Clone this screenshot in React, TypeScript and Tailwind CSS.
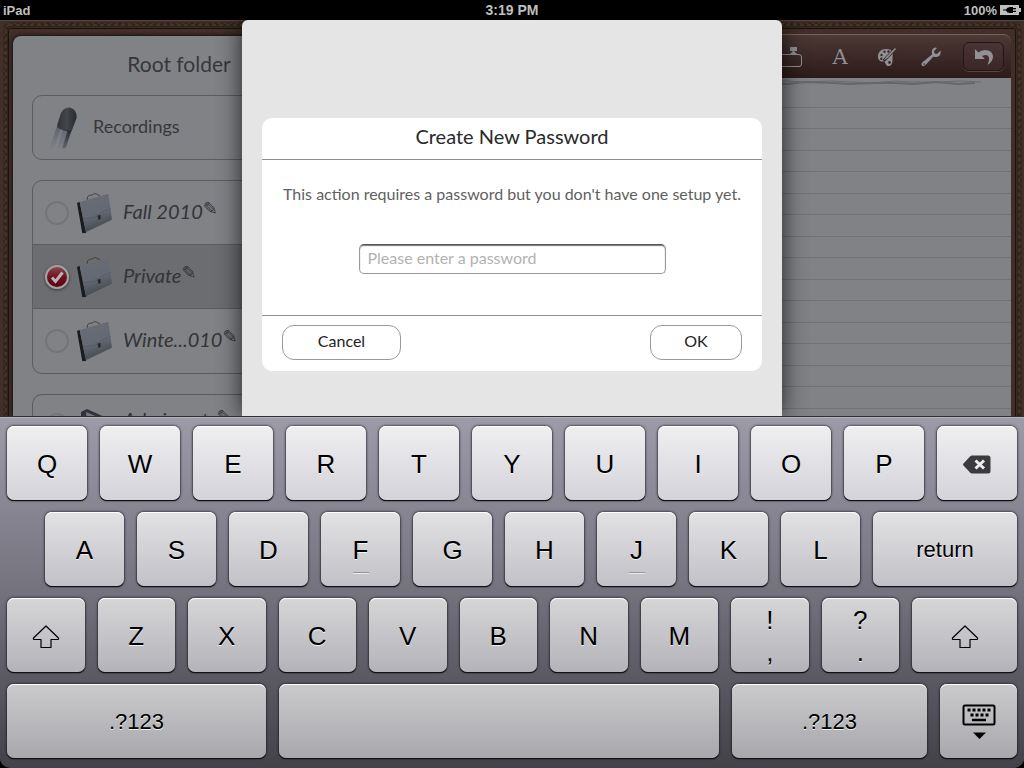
import type { ReactNode } from 'react';

const FOLDERS = [
  { name: 'Fall 2010', checked: false },
  { name: 'Private', checked: true },
  { name: 'Winte...010', checked: false },
];

const ROW_TOP = ['Q', 'W', 'E', 'R', 'T', 'Y', 'U', 'I', 'O', 'P'];
const ROW_HOME = ['A', 'S', 'D', 'F', 'G', 'H', 'J', 'K', 'L'];
const ROW_BOTTOM = ['Z', 'X', 'C', 'V', 'B', 'N', 'M'];

const SHADES = {
  top: 'from-[#efeff1] to-[#d4d3d9]',
  home: 'from-[#e2e2e4] to-[#c2c1c7]',
  bottom: 'from-[#d6d6d8] to-[#b4b3b9]',
  space: 'from-[#cbcbcd] to-[#a8a7ac]',
};

function Key({ shade, size = 'flex-1', label, children }: {
  shade: keyof typeof SHADES;
  size?: string;
  label?: string;
  children?: ReactNode;
}) {
  return (
    <button
      type="button"
      aria-label={label}
      className={`relative flex h-[74px] min-w-0 flex-col items-center justify-center rounded-[7px] bg-linear-to-b pt-0.5 text-[26px] leading-8 text-black [text-shadow:0_1px_0_rgba(255,255,255,0.8)] shadow-[inset_0_1px_0_#fff,0_1px_0_#111,0_1px_1px_#000,0_0_2px_1px_rgba(30,30,38,0.6)] ${SHADES[shade]} ${size}`}
    >
      {children}
    </button>
  );
}

function ShiftIcon() {
  return (
    <svg width="28" height="25" viewBox="0 0 28 25" fill="none" stroke="#000" strokeWidth="1.2" strokeLinejoin="round">
      <path d="M14 2 L26.500 14 Q27 15.500 25.500 15.500 H19 V23.500 H9 V15.500 H2.500 Q1 15.500 1.500 14 Z" />
    </svg>
  );
}

function DeleteIcon() {
  return (
    <svg width="28" height="19" viewBox="0 0 28 19">
      <path d="M9 .5H25Q27.500 .5 27.500 3V16Q27.500 18.500 25 18.500H9Q8 18.500 7 17.500L.5 10.500Q-.3 9.500 .5 8.500L7 1.500Q8 .5 9 .5Z" fill="#3b3b3d" />
      <path d="M12.500 5.500L21 13.500M21 5.500L12.500 13.500" stroke="#eeeef0" strokeWidth="3" />
    </svg>
  );
}

function HideKeyboardIcon() {
  return (
    <svg width="34" height="36" viewBox="0 0 34 36">
      <rect x="1.500" y="1.500" width="31" height="19" rx="1.500" fill="none" stroke="#000" strokeWidth="2" />
      <path d="M5.500 6H29" stroke="#000" strokeWidth="3" strokeDasharray="3 2" />
      <path d="M8.500 11H27" stroke="#000" strokeWidth="3" strokeDasharray="3 2" />
      <path d="M10 16H24" stroke="#000" strokeWidth="2.500" />
      <path d="M11 28.500H24L17.500 35Z" fill="#000" />
    </svg>
  );
}

function Keyboard() {
  return (
    <div className="bg-black">
      <div className="flex flex-col gap-3 rounded-b-[10px] border-t border-[#2e2e33] bg-linear-to-b from-[#9d9ba8] via-[#73727d] to-[#434249] px-[7px] pt-[9px] pb-[10px] font-['Liberation_Sans',Arial,sans-serif] shadow-[inset_0_1px_0_#b5b3be]">
        <div className="flex gap-[13px]">
          {ROW_TOP.map(k => <Key key={k} shade="top">{k}</Key>)}
          <Key shade="top" label="Delete"><DeleteIcon /></Key>
        </div>
        <div className="flex gap-[13px] pl-[38px]">
          {ROW_HOME.map(k => (
            <Key key={k} shade="home">
              {k}
              {(k === 'F' || k === 'J') && (
                <span className="absolute bottom-3 h-0.5 w-4 border-t border-[#929299] bg-[#ececee]" />
              )}
            </Key>
          ))}
          <Key shade="home" size="w-[144px]"><span className="text-[22px]">return</span></Key>
        </div>
        <div className="flex gap-[13px]">
          <Key shade="bottom" label="Left shift"><ShiftIcon /></Key>
          {ROW_BOTTOM.map(k => <Key key={k} shade="bottom">{k}</Key>)}
          <Key shade="bottom"><span>!</span><span>,</span></Key>
          <Key shade="bottom"><span>?</span><span>.</span></Key>
          <Key shade="bottom" size="w-[105px]" label="Right shift"><ShiftIcon /></Key>
        </div>
        <div className="flex gap-[13px]">
          <Key shade="space" size="flex-[259]"><span className="text-[22px]">.?123</span></Key>
          <Key shade="space" size="flex-[440]" label="Space" />
          <Key shade="space" size="flex-[195]"><span className="text-[22px]">.?123</span></Key>
          <Key shade="space" size="w-[77px]" label="Hide keyboard"><HideKeyboardIcon /></Key>
        </div>
      </div>
    </div>
  );
}

function StatusBar() {
  return (
    <header className="grid h-5 grid-cols-3 items-center bg-black px-[3px] font-['Liberation_Sans',Arial,sans-serif] text-[13px] leading-[19px] font-bold text-[#bfbfbf]">
      <span>iPad</span>
      <span className="text-center text-[14px]">3:19 PM</span>
      <span className="flex items-center justify-end gap-[3px]">
        100%
        <svg width="21" height="10" viewBox="0 0 21 10">
          <rect width="19" height="10" fill="#bfbfbf" />
          <path d="M19 3h2v4h-2z" fill="#bfbfbf" />
          <path d="M3 4.500h3Q7 2 10 2H13v1h3v1.300h-3v1.500h3v1.200h-3v1H10Q7 8 6 5.500H3z" fill="#000" />
        </svg>
      </span>
    </header>
  );
}

// Leather cover with two seams running round the notebook
function Leather() {
  return (
    <svg className="absolute inset-0 size-full" aria-hidden="true">
      <defs>
        <filter id="grain" x="0" y="0" width="100%" height="100%">
          <feTurbulence type="fractalNoise" baseFrequency="0.35" numOctaves="3" seed="4" />
          <feColorMatrix values="0 0 0 0 0.06  0 0 0 0 0.03  0 0 0 0 0.02  1.6 0 0 0 -0.45" />
        </filter>
      </defs>
      <rect width="100%" height="100%" fill="#3f2e28" />
      <rect width="100%" height="100%" filter="url(#grain)" />
      <g fill="none">
        <rect x="6" y="5" width="1013" height="500" rx="3" stroke="#2b1f19" strokeWidth="5" opacity="0.7" />
        <rect x="6" y="5" width="1013" height="500" rx="3" stroke="#574726" strokeWidth="1" strokeDasharray="4 3" />
        <rect x="4.500" y="3.500" width="1016" height="500" rx="3" stroke="#40322a" strokeWidth="1" strokeDasharray="3 3" />
        <rect x="8.500" y="8.500" width="1007" height="500" rx="2" stroke="#1b1312" />
        <path d="M0 .5H1024" stroke="#54453e" />
      </g>
    </svg>
  );
}

function Briefcase() {
  return (
    <svg className="shrink-0" width="36" height="42" viewBox="0 0 108 126">
      <defs>
        <linearGradient id="case" x1="0" y1="0" x2="0.3" y2="1">
          <stop offset="0" stopColor="#686e76" />
          <stop offset="0.6" stopColor="#646a73" />
          <stop offset="1" stopColor="#464b53" />
        </linearGradient>
      </defs>
      <path d="M30 24L32 14Q36 9 46 9Q52 2 59 6L70 13L71 19" fill="none" stroke="#33363b" strokeWidth="2.500" />
      <path d="M0 33L8 29L28 122L16 124Z" fill="#191b1f" />
      <path d="M8 30L94 5L105 83L26 121Z" fill="url(#case)" />
      <path d="M21 80Q44 86 62 74Q76 56 101 50" fill="none" stroke="#4a4f57" strokeWidth="2" />
      <path d="M21 82Q44 88 63 76Q76 58 101 52" fill="none" stroke="#777d85" strokeWidth="1" />
      <path d="M62 71L70 68L71 81L64 84Z" fill="#24272c" />
    </svg>
  );
}

function Microphone() {
  return (
    <svg className="shrink-0" width="28" height="42" viewBox="0 0 84 126">
      <defs>
        <linearGradient id="stem" x1="0" y1="0" x2="0" y2="1">
          <stop offset="0" stopColor="#5d6269" />
          <stop offset="1" stopColor="#6d7178" stopOpacity="0.2" />
        </linearGradient>
        <linearGradient id="stemDark" x1="0" y1="0" x2="0" y2="1">
          <stop offset="0" stopColor="#2c2f34" />
          <stop offset="1" stopColor="#2c2f34" stopOpacity="0.3" />
        </linearGradient>
        <linearGradient id="head">
          <stop offset="0" stopColor="#2f3135" />
          <stop offset="0.5" stopColor="#43464b" />
          <stop offset="1" stopColor="#27292d" />
        </linearGradient>
      </defs>
      <path d="M23 60L67 72L50 124H2Z" fill="url(#stem)" />
      <path d="M56 70L67 72L50 124H40Z" fill="url(#stemDark)" />
      <path d="M34 66L42 69L24 124H15Z" fill="#8f939a" opacity="0.35" />
      <path d="M24 56L35 20Q44 0 64 2Q84 8 83 32L68 72Q44 71 24 58Z" fill="url(#head)" />
      <path d="M24 60Q44 72 67 73" fill="none" stroke="#1b1d20" strokeWidth="2" />
    </svg>
  );
}

function FolderName({ name }: { name: string }) {
  return (
    <span className="ml-[10px] flex text-[20px] leading-6 whitespace-nowrap text-[#333438] italic">
      {name}
      <span className="font-['DejaVu_Sans',sans-serif] text-[18px] leading-5 not-italic">✎</span>
    </span>
  );
}

function FolderRow({ name, checked }: { name: string; checked: boolean }) {
  return (
    <label className={`flex h-16 items-center border-b border-[#5b5c60] pl-3 last:border-b-0 ${checked ? 'bg-[#6c6d70]' : ''}`}>
      <span className="relative size-6 shrink-0">
        <input
          type="checkbox"
          defaultChecked={checked}
          className="block size-6 appearance-none rounded-full border-2 border-[#747579] checked:border-[#a2a2a5] checked:bg-linear-to-b checked:from-[#8c4350] checked:via-[#70101f] checked:to-[#600011] checked:shadow-[0_1px_3px_#333]"
        />
        {checked && (
          <svg className="absolute inset-0" width="24" height="24" viewBox="0 0 24 24">
            <path d="M7 12.500L10.500 16.500L17.500 7.500" fill="none" stroke="#b5b5b7" strokeWidth="3" />
          </svg>
        )}
      </span>
      <span className="ml-2"><Briefcase /></span>
      <span className="pb-1"><FolderName name={name} /></span>
    </label>
  );
}

function Sidebar() {
  return (
    <aside className="w-[332px] shrink-0 rounded-t-lg bg-[#818286] px-[19px] pt-[14px] text-[#36373b] shadow-[0_0_4px_#000]">
      <h1 className="text-center text-[21px] leading-7">Root folder</h1>
      <button type="button" className="mt-[17px] flex h-[65px] w-full items-center rounded-[10px] border border-[#5b5c60] pl-4 text-left">
        <Microphone />
        <span className="ml-4 pb-0.5 text-[18px]">Recordings</span>
      </button>
      <div className="mt-5 overflow-hidden rounded-[10px] border border-[#5b5c60]">
        {FOLDERS.map(f => <FolderRow key={f.name} {...f} />)}
      </div>
      <div className="mt-5 rounded-t-[10px] border border-b-0 border-[#5b5c60]">
        <label className="flex h-16 items-start pl-3">
          <input type="checkbox" className="mt-[18px] size-6 shrink-0 appearance-none rounded-full border-2 border-[#747579]" />
          <svg className="mt-[14px] ml-3 shrink-0" width="32" height="36" viewBox="0 0 32 36">
            <path d="M0 3L6 0L28 10V36H0Z" fill="#30343a" />
            <path d="M5 3L26 12V36H9Z" fill="#777b81" />
          </svg>
          <span className="mt-3"><FolderName name="Admin...nts" /></span>
        </label>
      </div>
    </aside>
  );
}

function Toolbar() {
  return (
    <div className="flex h-11 items-center justify-end rounded-t-lg border-t border-[#75625f] bg-linear-to-b from-[#4d3936] to-[#2b1b19] pr-[7px] text-[#909194]">
      <button type="button" aria-label="Tape" className="mr-7">
        <svg width="26" height="22" viewBox="0 0 26 22" fill="none" stroke="currentColor">
          <rect x=".5" y="8.500" width="24" height="12" rx="2.500" />
          <path d="M13 1h7v4h-7zM13 8l3-3h1l3 3z" fill="currentColor" stroke="none" />
        </svg>
      </button>
      <button type="button" aria-label="Text" className="mr-7 w-[18px] text-center font-['DejaVu_Serif',serif] text-[21px] leading-8">
        A
      </button>
      <button type="button" aria-label="Colors" className="mr-6">
        <svg width="20" height="20" viewBox="0 0 20 20">
          <path d="M9 2C4 2 1 5.500 1 9.500S4 15 6 14.500C9 13.500 7.500 19 12 19C15 19 16 14 15.500 10L16 5C15 3 12 2 9 2Z" fill="currentColor" />
          <g fill="#3d2b29">
            <circle cx="4.500" cy="8" r="1.200" />
            <circle cx="7.500" cy="4.800" r="1.200" />
            <circle cx="11.500" cy="4.500" r="1.200" />
            <circle cx="4.200" cy="11.800" r="1.200" />
            <circle cx="12.500" cy="15.500" r="1.400" />
          </g>
          <path d="M6.500 14L19 1" stroke="#3d2b29" strokeWidth="3.200" />
          <path d="M6.500 13.500L9 10L18 1L19 2L10.500 11Z" fill="currentColor" />
        </svg>
      </button>
      <button type="button" aria-label="Settings" className="mr-[22px]">
        <svg width="20" height="20" viewBox="0 0 20 20" fill="currentColor">
          <path d="M11 6.500Q10 1.500 14.500 .5L16 1L13 4L13.500 6.500L16 7L19.500 3.500Q20.500 9 15.500 10Q13.500 10 12.500 9.500L4.500 18Q2.500 20 1 18.500Q-.3 17 1.500 15.300L11 7.500ZM2.500 16.500V17.800H3.800V16.500Z" fillRule="evenodd" />
        </svg>
      </button>
      <button type="button" aria-label="Undo" className="flex h-[29px] w-[41px] items-center justify-center rounded-md border border-[#221513] bg-linear-to-b from-[#493534] to-[#3a2625] shadow-[0_1px_0_#574443]">
        <svg width="20" height="18" viewBox="0 0 20 18" fill="currentColor">
          <path d="M1 1V11H11L8 8Q14 5 15 10Q15.500 13 13.500 17Q19.500 13 19 8Q18 2 11 2Q7 2.200 4.500 4.500Z" />
        </svg>
      </button>
    </div>
  );
}

function Notebook() {
  return (
    <section className="flex min-w-0 flex-1 flex-col">
      <Toolbar />
      <div className="flex flex-1 flex-col bg-[#818286]">
        {/* torn edge of the previous pages */}
        <svg className="h-2 w-full" viewBox="0 0 660 8" preserveAspectRatio="none" fill="none" aria-hidden="true">
          <path d="M0 3q18 2 36 0t34 1t40-1t38 1t36-1t40 1t34-1t38 1l18-1l20 1l16-1l24 1l14-1l22 2l24-2l16 1l30-1l18 1l22 1l24-2l16 1l30 0l18-1l22 1" stroke="#696a6e" strokeWidth="1" />
          <path d="M0 6q20-2 38 0t34-1t40 1t38-1t36 1t40-1t34 1t38-1l16 1l24-2l14 2l20-1l26 1l14-1l24 1l18-2l28 1l16 1l24-1l22 0l18 1l24-2l20 2l18-1" stroke="#66676b" strokeWidth="2" />
        </svg>
        <div className="flex flex-1 flex-col pb-[7px]">
          {Array.from({ length: 15 }, (_, i) => (
            <div key={i} className="flex-1 border-b border-[#717276]" />
          ))}
        </div>
      </div>
    </section>
  );
}

function PasswordDialog() {
  return (
    <div role="dialog" aria-labelledby="dialog-title" className="absolute inset-y-0 left-1/2 w-full max-w-[540px] -translate-x-1/2 rounded-t-md bg-[#e5e5e5] px-5 pt-[98px] shadow-[0_0_24px_rgba(0,0,0,0.75)]">
      <form className="rounded-[10px] bg-white" onSubmit={e => e.preventDefault()}>
        <h2 id="dialog-title" className="border-b border-[#8e8e8e] pt-1 pb-[9px] text-center text-[20px] leading-7 text-[#2a2a2a]">
          Create New Password
        </h2>
        <div className="flex flex-col items-center pt-[22px] pb-[41px]">
          <label htmlFor="password" className="text-[16px] leading-6 whitespace-nowrap text-[#5f5f5f]">
            This action requires a password but you don't have one setup yet.
          </label>
          <input
            id="password"
            type="password"
            placeholder="Please enter a password"
            className="mt-[38px] h-[30px] w-[307px] rounded-[5px] border border-[#999] border-t-[#555] px-2 pb-[3px] text-[16px] text-[#333] shadow-[inset_0_1px_1px_#777] outline-none placeholder:text-[#b2b2b2]"
          />
        </div>
        <div className="flex justify-between border-t border-[#8e8e8e] px-5 pt-[9px] pb-[11px] text-[16px] text-[#222]">
          <button type="button" className="h-[35px] w-[119px] rounded-xl border border-[#999] pb-[3px]">Cancel</button>
          <button type="submit" className="h-[35px] w-[92px] rounded-xl border border-[#999] pb-[3px]">OK</button>
        </div>
      </form>
    </div>
  );
}

export default function App() {
  return (
    <div className="flex h-screen flex-col overflow-hidden bg-black font-['Lato',sans-serif]">
      <StatusBar />
      <main className="relative min-h-0 flex-1 overflow-hidden">
        <Leather />
        <div className="relative flex h-full gap-2 px-[13px] pt-[14px]">
          <div className="flex pt-0.5"><Sidebar /></div>
          <Notebook />
        </div>
        <PasswordDialog />
      </main>
      <Keyboard />
    </div>
  );
}
